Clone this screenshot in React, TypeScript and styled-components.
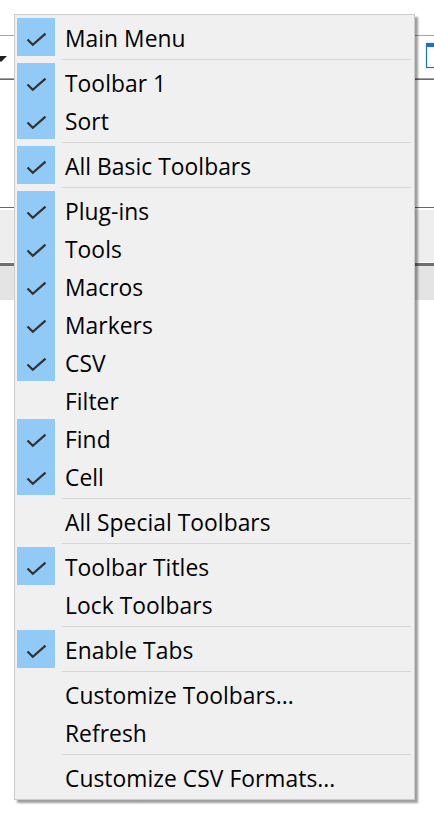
import React from "react";
import styled, { createGlobalStyle } from "styled-components";

const Global = createGlobalStyle`
  html, body { margin: 0; padding: 0; background: #ffffff; }
  body { width: 434px; height: 826px; overflow: hidden; font-family: "Open Sans", "Noto Sans", sans-serif; }
`;

const Page = styled.div`
  position: relative;
  width: 434px;
  height: 826px;
  display: flex;
  flex-direction: column;
  background: #ffffff;
`;

const TopStrip = styled.div`
  height: 35px;
  border-bottom: 1px solid #a6a6a6;
`;

const ToolRow = styled.div`
  height: 42px;
  display: flex;
  align-items: center;
  justify-content: space-between;
  border-bottom: 1px solid #a0a0a0;
  box-shadow: 0 1px 0 #6a6a6a;
`;

const DropArrow = styled.div`
  width: 0;
  height: 0;
  border-left: 6px solid transparent;
  border-right: 6px solid transparent;
  border-top: 6px solid #222;
  margin-left: -5px;
  margin-top: 4px;
`;

const RightIcons = styled.div`
  display: flex;
  align-items: center;
  gap: 12px;
`;

const Blank = styled.div`
  height: 128px;
  border-bottom: 1px solid #666;
`;

const GreyBand = styled.div`
  margin-top: 2px;
  height: 52px;
  background: #eeeeee;
  border-bottom: 1px solid #fafafa;
  box-shadow: 0 3px 0 #6f6f6f;
`;

const Ruler = styled.div`
  margin-top: 3px;
  height: 34px;
  background: #e4e4e4;
`;

const Editor = styled.div`
  flex: 1;
  background: #ffffff;
`;

const Menu = styled.div`
  position: absolute;
  left: 14px;
  top: 14px;
  width: 395px;
  padding: 3px 2px;
  background: #f0f0f0;
  border: 1px solid #cccccc;
  box-shadow: 3px 3px 2px rgba(0, 0, 0, 0.38);
  display: flex;
  flex-direction: column;
`;

const Item = styled.div`
  height: 38px;
  display: flex;
  align-items: center;
`;

const CheckCell = styled.div<{ $on: boolean }>`
  width: 38px;
  height: 38px;
  flex: none;
  background: ${(p) => (p.$on ? "#91c9f7" : "transparent")};
  display: flex;
  align-items: center;
  justify-content: center;
`;

const Label = styled.span`
  margin-left: 10px;
  padding-top: 3px;
  font-family: "Open Sans", "Noto Sans", sans-serif;
  font-size: 22.8px;
  color: #000;
  line-height: 35px;
  white-space: nowrap;
  letter-spacing: 0.05px;
`;

const Sep = styled.div`
  height: 7px;
  display: flex;
  align-items: center;
  padding-left: 45px;
  padding-right: 1px;
  &::after {
    content: "";
    flex: 1;
    height: 1px;
    background: #d7d7d7;
  }
`;

const Check = () => (
  <svg width="38" height="38" viewBox="0 0 38 38">
    <path d="M10.5 21.5 L15.8 26.8 L28.5 15.7" fill="none" stroke="#333" strokeWidth="2.3" />
  </svg>
);

type Entry = { label: string; on: boolean } | "sep";

const entries: Entry[] = [
  { label: "Main Menu", on: true },
  "sep",
  { label: "Toolbar 1", on: true },
  { label: "Sort", on: true },
  "sep",
  { label: "All Basic Toolbars", on: true },
  "sep",
  { label: "Plug-ins", on: true },
  { label: "Tools", on: true },
  { label: "Macros", on: true },
  { label: "Markers", on: true },
  { label: "CSV", on: true },
  { label: "Filter", on: false },
  { label: "Find", on: true },
  { label: "Cell", on: true },
  "sep",
  { label: "All Special Toolbars", on: false },
  "sep",
  { label: "Toolbar Titles", on: true },
  { label: "Lock Toolbars", on: false },
  "sep",
  { label: "Enable Tabs", on: true },
  "sep",
  { label: "Customize Toolbars...", on: false },
  { label: "Refresh", on: false },
  "sep",
  { label: "Customize CSV Formats...", on: false },
];

const SmallIcons = () => (
  <svg width="34" height="30" viewBox="0 0 34 30">
    <rect x="0" y="5" width="5" height="1.5" fill="#222" />
    <rect x="0" y="11" width="5" height="1.5" fill="#222" />
    <rect x="0" y="16" width="3" height="2" fill="#222" />
    <rect x="3" y="17" width="6" height="2" fill="#e8231f" />
    <rect x="0" y="21" width="5" height="1.5" fill="#222" />
    <rect x="26.5" y="1.5" width="10" height="24" fill="#fff" stroke="#1c6fd1" strokeWidth="1.2" />
    <rect x="26" y="1" width="10" height="4" fill="#1c6fd1" />
  </svg>
);

export default function App() {
  return (
    <Page>
      <Global />
      <TopStrip />
      <ToolRow>
        <DropArrow />
        <RightIcons>
          <SmallIcons />
        </RightIcons>
      </ToolRow>
      <Blank />
      <GreyBand />
      <Ruler />
      <Editor />
      <Menu>
        {entries.map((e, i) =>
          e === "sep" ? (
            <Sep key={i} />
          ) : (
            <Item key={i}>
              <CheckCell $on={e.on}>{e.on && <Check />}</CheckCell>
              <Label>{e.label}</Label>
            </Item>
          )
        )}
      </Menu>
    </Page>
  );
}
